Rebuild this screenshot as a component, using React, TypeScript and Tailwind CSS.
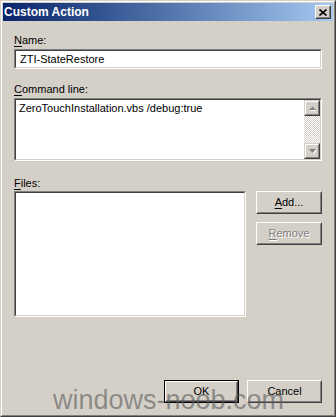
import React from "react";

// classic win2000 bevels
function Sunken({ className, children }: { className?: string; children?: React.ReactNode }) {
  return (
    <div className={"border border-t-[#808080] border-l-[#808080] border-b-white border-r-white " + (className ?? "")}>
      <div className="h-full w-full border border-t-[#404040] border-l-[#404040] border-b-[#d4d0c8] border-r-[#d4d0c8] bg-white">
        {children}
      </div>
    </div>
  );
}

function Btn({
  label,
  hot,
  disabled,
  isDefault,
  className,
}: {
  label: string;
  hot?: number;
  disabled?: boolean;
  isDefault?: boolean;
  className?: string;
}) {
  const text =
    hot === undefined ? (
      label
    ) : (
      <>
        {label.slice(0, hot)}
        <span className="underline underline-offset-2">{label[hot]}</span>
        {label.slice(hot + 1)}
      </>
    );
  const inner = (
    <div className="h-full w-full border border-t-white border-l-white border-b-[#404040] border-r-[#404040]">
      <div className="flex h-full w-full items-center justify-center border border-t-[#d4d0c8] border-l-[#d4d0c8] border-b-[#808080] border-r-[#808080]">
        <span
          className={
            disabled ? "text-[#808080] [text-shadow:1px_1px_0_#ffffff]" : "text-black"
          }
        >
          {text}
        </span>
      </div>
    </div>
  );
  return (
    <div className={"bg-[#d4d0c8] " + (isDefault ? "border border-black " : "") + (className ?? "")}>
      {inner}
    </div>
  );
}

function Label({ text, hot }: { text: string; hot: number }) {
  return (
    <div className="h-[13px] leading-[13px]">
      {text.slice(0, hot)}
      <span className="underline underline-offset-2">{text[hot]}</span>
      {text.slice(hot + 1)}
    </div>
  );
}

function ScrollBtn({ up }: { up?: boolean }) {
  return (
    <div className="h-[16px] w-[16px] border border-t-[#d4d0c8] border-l-[#d4d0c8] border-b-[#404040] border-r-[#404040] bg-[#d4d0c8]">
      <div className="flex h-full w-full items-center justify-center border border-t-white border-l-white border-b-[#808080] border-r-[#808080]">
        <svg width="7" height="5" viewBox="0 0 7 5">
          {up ? (
            <>
              <path d="M4 2l3 3H1z" fill="#ffffff" />
              <path d="M3.5 0.5L7 4H0z" fill="#808080" />
            </>
          ) : (
            <>
              <path d="M1 1h7L4.5 5z" fill="#ffffff" />
              <path d="M0 0h7L3.5 4z" fill="#808080" />
            </>
          )}
        </svg>
      </div>
    </div>
  );
}

export default function App() {
  return (
    <div
      className="relative h-[417px] w-[336px] overflow-hidden bg-[#d4d0c8] text-[11px] text-black"
      style={{ fontFamily: '"Liberation Sans", Arial, sans-serif' }}
    >
      <div className="flex h-full w-full flex-col border border-t-[#d4d0c8] border-l-[#d4d0c8] border-b-[#404040] border-r-[#404040]">
        <div className="flex h-full w-full flex-col border border-t-white border-l-white border-b-[#808080] border-r-[#808080] p-px">
          {/* title bar */}
          <div className="flex h-[18px] items-center justify-between bg-gradient-to-r from-[#0a246a] to-[#a6caf0] pl-[1px] pr-[2px]">
            <span className="text-[12px] font-bold text-white">Custom Action</span>
            <div className="h-[14px] w-[16px] border border-t-white border-l-white border-b-[#404040] border-r-[#404040] bg-[#d4d0c8]">
              <div className="flex h-full w-full items-center justify-center border border-t-[#d4d0c8] border-l-[#d4d0c8] border-b-[#808080] border-r-[#808080]">
                <svg width="8" height="7" viewBox="0 0 8 7">
                  <path d="M0.5 0.5L7.5 6.5M7.5 0.5L0.5 6.5" stroke="#000" strokeWidth="1.6" />
                </svg>
              </div>
            </div>
          </div>

          {/* body */}
          <div className="flex flex-1 flex-col px-[11px] pt-[13px] pb-[11px]">
            <Label text="Name:" hot={0} />
            <Sunken className="mt-[2px] h-[20px]">
              <div className="pl-[4px] leading-[16px]">ZTI-StateRestore</div>
            </Sunken>

            <div className="mt-[14px]">
              <Label text="Command line:" hot={0} />
            </div>
            <Sunken className="mt-[2px] h-[63px]">
              <div className="flex h-full">
                <div className="flex-1 pl-[3px] pt-[1px] leading-[14px]">
                  ZeroTouchInstallation.vbs /debug:true
                </div>
                <div className="flex h-full w-[16px] flex-col justify-between bg-[repeating-conic-gradient(#d4d0c8_0%_25%,#ffffff_0%_50%)] bg-[length:2px_2px]">
                  <ScrollBtn up />
                  <ScrollBtn />
                </div>
              </div>
            </Sunken>

            <div className="mt-[16px]">
              <Label text="Files:" hot={0} />
            </div>
            <div className="mt-[1px] flex gap-[10px]">
              <Sunken className="h-[126px] w-[233px]" />
              <div className="flex flex-col gap-[8px]">
                <Btn label="Add..." hot={0} className="h-[23px] w-[66px]" />
                <Btn label="Remove" hot={0} disabled className="h-[23px] w-[66px]" />
              </div>
            </div>

            <div className="mt-auto flex justify-end gap-[8px]">
              <Btn label="OK" isDefault className="h-[23px] w-[75px]" />
              <Btn label="Cancel" className="h-[23px] w-[75px]" />
            </div>
          </div>
        </div>
      </div>

      {/* watermark */}
      <div className="pointer-events-none absolute left-[53px] top-[384px] text-[27px] leading-[32px] text-[#5a5a5a]/60">
        windows-noob.com
      </div>
    </div>
  );
}
